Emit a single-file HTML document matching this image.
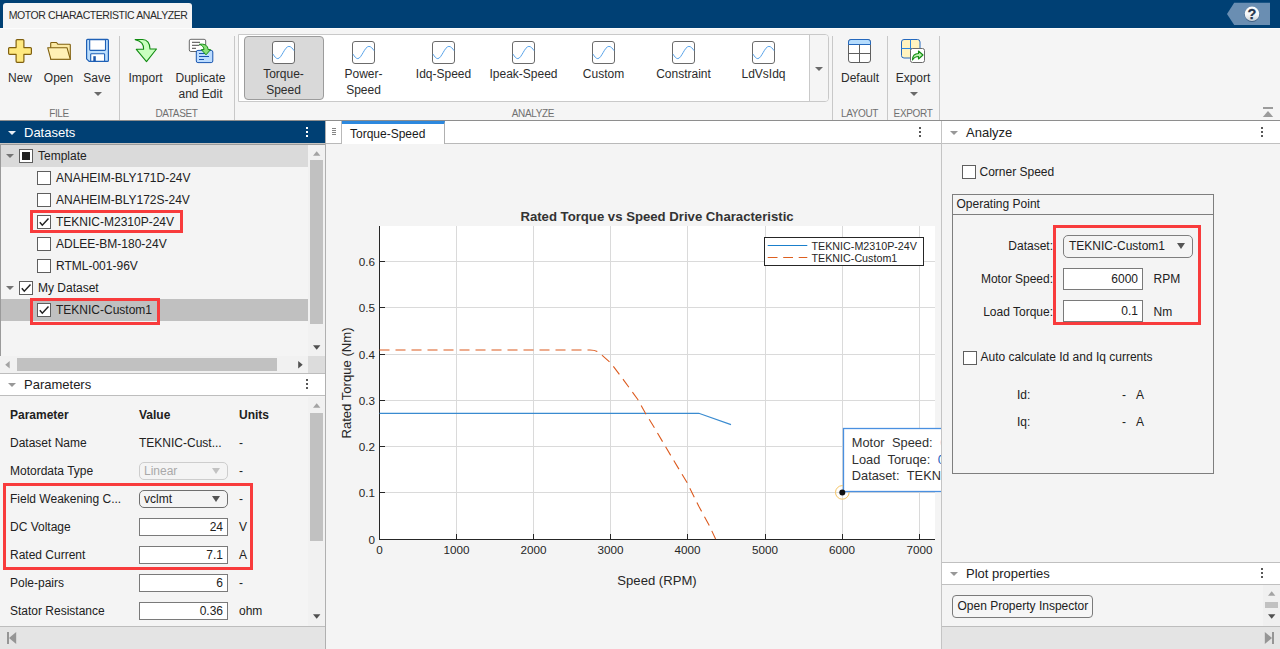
<!DOCTYPE html>
<html><head><meta charset="utf-8">
<style>
*{box-sizing:border-box;margin:0;padding:0}
html,body{width:1280px;height:649px;overflow:hidden;background:#f4f4f4;font-family:"Liberation Sans",sans-serif;font-size:12px;color:#212121}
div,span,svg{position:absolute}
.t{white-space:nowrap;line-height:14px;height:14px}
#hdr{left:0;top:0;width:1280px;height:28px;background:#004074}
#apptab{left:3px;top:3px;width:189px;height:27px;background:#f5f5f5;border-radius:3px 3px 0 0}
#apptab span{left:5.700px;top:5px;font-size:10.500px;letter-spacing:-0.420px;color:#2a2a2a;white-space:nowrap;line-height:14px}
#ts{left:0;top:28px;width:1280px;height:93px;background:#f5f5f5;border-top:1px solid #fcfcfc;border-bottom:1px solid #8e8e8e}
.vsep{top:36px;width:1px;height:84px;background:#c8c8c8}
.tl{font-size:12px;color:#2c2c2c;text-align:center;white-space:nowrap;line-height:16px;transform:translateX(-50%)}
.sec{top:107px;font-size:10px;color:#707070;text-align:center;line-height:14px;white-space:nowrap;transform:translateX(-50%);letter-spacing:-0.350px}
.dar{width:0;height:0;border-left:4px solid transparent;border-right:4px solid transparent;border-top:4px solid #6a6a6a}
</style></head><body>
<!-- HEADER -->
<div id="hdr"><div id="apptab"><span>MOTOR CHARACTERISTIC ANALYZER</span></div>
<svg style="left:1226px;top:2px" width="46" height="24" viewBox="1226 2 46 24"><defs><linearGradient id="hg" x1="0" y1="0" x2="0" y2="1"><stop offset="0" stop-color="#ffffff"/><stop offset=".55" stop-color="#f4f6f8"/><stop offset="1" stop-color="#c9d1d9"/></linearGradient></defs><path d="M1234.200 2.800H1270V24.900H1234.200L1227 13.900Z" fill="#6a8eb2"/><circle cx="1252" cy="14.300" r="7.600" fill="#1d3a5c" opacity=".55"/><circle cx="1252" cy="13.800" r="7.300" fill="url(#hg)"/><text x="1252" y="18.600" text-anchor="middle" font-family="Liberation Sans" font-weight="bold" font-size="14.500" fill="#26374f" stroke="#26374f" stroke-width=".3">?</text></svg>
</div>
<!-- TOOLSTRIP -->
<div id="ts"></div>
<div class="vsep" style="left:119px"></div>
<div class="vsep" style="left:234px"></div>
<div class="vsep" style="left:832px"></div>
<div class="vsep" style="left:887px"></div>
<div class="vsep" style="left:939px"></div>
<!-- FILE icons -->
<svg style="left:0;top:32px" width="240" height="36" viewBox="0 32 240 36">
<path d="M17.100 39.600h5.800a1 1 0 0 1 1 1v7h6.500a1 1 0 0 1 1 1v4.700a1 1 0 0 1-1 1h-6.500v7a1 1 0 0 1-1 1h-5.800a1 1 0 0 1-1-1v-7h-6.500a1 1 0 0 1-1-1v-4.700a1 1 0 0 1 1-1h6.500v-7a1 1 0 0 1 1-1z" fill="#ffe97f" stroke="#80600f" stroke-width="1.200" stroke-linejoin="round"/>
<path d="M50.700 59.200V43.300a.8.800 0 0 1 .8-.8h5l1.500 1.800h11.500a.8.800 0 0 1 .8.800V59.200z" fill="#fbe9a4" stroke="#80600f" stroke-width="1.100" stroke-linejoin="round"/>
<path d="M47.700 47.700H67l3.300 11.600H50.900z" fill="#fff1b5" stroke="#80600f" stroke-width="1.100" stroke-linejoin="round"/>
<path d="M87.600 39.400h19.800a1 1 0 0 1 1 1v20a1 1 0 0 1-1 1H89.100l-2.500-2.500V40.400a1 1 0 0 1 1-1z" fill="#bcdefc" stroke="#1e60b6" stroke-width="1.200" stroke-linejoin="round"/>
<path d="M89.700 39.600h15.800v10a.8.800 0 0 1-.8.800H90.500a.8.800 0 0 1-.8-.8z" fill="#fff" stroke="#1e60b6" stroke-width="1.100"/>
<path d="M90.700 61.400v-6.800a.8.800 0 0 1 .8-.8h12.300a.8.800 0 0 1 .8.800v6.800z" fill="#fff" stroke="#1e60b6" stroke-width="1.100"/>
<rect x="93.300" y="56.200" width="2.500" height="5.300" fill="#1b57ad"/>
<!-- import -->
<path d="M135.200 39.500H142.500C147.200 39.500 150 43.500 150 49H156.500L146.500 61.600 136.300 49.300H143.600C143.800 45 141 41 135.200 39.800z" fill="#c9ffbf" stroke="#118c11" stroke-width="1.100" stroke-linejoin="round"/>
<!-- duplicate -->
<rect x="189.300" y="39.300" width="16.400" height="12.200" rx="1.600" fill="#fff" stroke="#686868" stroke-width="1"/>
<path d="M192 42.400h8M192 45.400h7.500M192 48.400h4" stroke="#6e6e6e" stroke-width="1.100"/>
<rect x="196.300" y="50.400" width="16.500" height="12.200" rx="1.600" fill="#bcdcff" stroke="#1855b0" stroke-width="1"/>
<path d="M199 53.500h6M199 56.500h10M199 59.500h5" stroke="#1855b0" stroke-width="1.100"/>
<path d="M199.300 44.300c2.500-.3 4.500-.2 6 .6 1.800 1 2.700 2.600 2.800 4.700h2.500L206 54.800l-4.700-5.200h2.700c0-1.200-.5-2.300-1.300-3.200-.9-1-2-1.700-3.400-2.100z" fill="#8be07a" stroke="#118c11" stroke-width="1" stroke-linejoin="round"/>
</svg>
<div class="tl" style="left:20px;top:70px">New</div>
<div class="tl" style="left:58.500px;top:70px">Open</div>
<div class="tl" style="left:97px;top:70px">Save</div>
<div class="dar" style="left:94px;top:92px"></div>
<div class="sec" style="left:59px">FILE</div>
<!-- DATASET -->
<div class="tl" style="left:145.500px;top:70px">Import</div>
<div class="tl" style="left:200.500px;top:70px">Duplicate<br>and Edit</div>
<div class="sec" style="left:176.500px">DATASET</div>
<!-- GALLERY -->
<div style="left:238px;top:34px;width:591px;height:68px;background:#fff;border:1px solid #c9c9c9;border-radius:0 4px 4px 0"></div>
<div style="left:809px;top:35px;width:19px;height:66px;background:#f5f5f5;border-left:1px solid #c9c9c9;border-radius:0 3px 3px 0"></div>
<div class="dar" style="left:815px;top:67px"></div>
<div style="left:244px;top:36px;width:80px;height:64px;background:#d9d9d9;border:1px solid #9c9c9c;border-radius:4px"></div>
<svg style="left:0;top:0" width="0" height="0"><defs><g id="gi"><rect x=".5" y=".5" width="22" height="22" rx="2.500" fill="#fff" stroke="#6b6b6b"/><path d="M1 13.100C2.500 15.500 4 17.600 5.800 17.600 9.600 17.600 12.600 5.400 16.900 5.400 19 5.400 20.500 7.500 22.100 9.700" fill="none" stroke="#55a2ea" stroke-width="1"/></g></defs></svg>
<svg style="left:272px;top:41px" width="23" height="23"><use href="#gi"/></svg>
<svg style="left:352px;top:41px" width="23" height="23"><use href="#gi"/></svg>
<svg style="left:432px;top:41px" width="23" height="23"><use href="#gi"/></svg>
<svg style="left:512px;top:41px" width="23" height="23"><use href="#gi"/></svg>
<svg style="left:592px;top:41px" width="23" height="23"><use href="#gi"/></svg>
<svg style="left:672px;top:41px" width="23" height="23"><use href="#gi"/></svg>
<svg style="left:752px;top:41px" width="23" height="23"><use href="#gi"/></svg>
<div class="tl" style="left:283.500px;top:66px">Torque-<br>Speed</div>
<div class="tl" style="left:363.500px;top:66px">Power-<br>Speed</div>
<div class="tl" style="left:443.500px;top:66px">Idq-Speed</div>
<div class="tl" style="left:523.500px;top:66px">Ipeak-Speed</div>
<div class="tl" style="left:603.500px;top:66px">Custom</div>
<div class="tl" style="left:683.500px;top:66px">Constraint</div>
<div class="tl" style="left:763.500px;top:66px">LdVsIdq</div>
<div class="sec" style="left:533px">ANALYZE</div>
<!-- LAYOUT / EXPORT -->
<svg style="left:848px;top:39px" width="24" height="24" viewBox="0 0 24 24"><rect x=".5" y=".5" width="22" height="23" rx="2.500" fill="#fff" stroke="#5f5f5f"/><path d="M.5 3a2.500 2.500 0 0 1 2.500-2.500h17a2.500 2.500 0 0 1 2.500 2.500v2.500H.5z" fill="#b5dcfd" stroke="#2468bd"/><path d="M.5 14.500h22M11.500 5.500v18" stroke="#5f5f5f"/></svg>
<svg style="left:901px;top:39px" width="26" height="26" viewBox="0 0 26 26"><rect x=".5" y=".5" width="18.500" height="18.500" rx="2.500" fill="#fff3bf" stroke="#2468bd"/><path d="M.5 9.500h18M9.500 .5v18" stroke="#2b86e0"/><rect x="9.500" y="9.500" width="14" height="14" rx="2" fill="#fff" stroke="#6b6b6b"/><path d="M11.500 21c0-4 2-6.500 6-6.500V12l4.500 4-4.500 4v-2.500c-3 0-4.500 1-6 3.500z" fill="#b9f2ad" stroke="#118c11" stroke-width="1.100" stroke-linejoin="round"/></svg>
<div class="tl" style="left:860px;top:70px">Default</div>
<div class="tl" style="left:913px;top:70px">Export</div>
<div class="dar" style="left:909.500px;top:92px"></div>
<div class="sec" style="left:859.500px">LAYOUT</div>
<div class="sec" style="left:913px">EXPORT</div>
<svg style="left:1262px;top:106px" width="13" height="12" viewBox="1262 106 13 12"><rect x="1263" y="107" width="10" height="2" fill="#9c9c9c"/><path d="M1268 111L1273.200 117H1262.800z" fill="#9c9c9c"/></svg>
<style>
.cb{width:14px;height:14px;background:#fff;border:1px solid #5e5e5e}
.car{width:0;height:0;border-left:4px solid transparent;border-right:4px solid transparent;border-top:4px solid #989898}
.kb{width:2px;height:2px;background:#585858;box-shadow:0 4px 0 #585858,0 8px 0 #585858}
.ph{font-size:13px;line-height:16px;white-space:nowrap;color:#212121}
.rb{border:3px solid #f83b3c}
.inp{height:18px;background:#fff;border:1px solid #7a7a7a;text-align:right;line-height:16px;font-size:12px;padding-right:4px;color:#212121}
.dd{height:18px;background:#f4f4f4;border:1px solid #6f6f6f;border-radius:5px;line-height:16px;font-size:12px;padding-left:4px;color:#212121;white-space:nowrap}
.dda{width:0;height:0;border-left:4.250px solid transparent;border-right:4.250px solid transparent;border-top:6px solid #555}
</style>
<!-- DATASETS PANEL -->
<div style="left:0;top:121px;width:325px;height:23px;background:#004074"></div>
<div class="car" style="left:8px;top:131px;border-top-color:#e8eef4"></div>
<div class="ph" style="left:24px;top:125px;color:#fff">Datasets</div>
<div class="kb" style="left:306px;top:127px;background:#fff;box-shadow:0 4px 0 #fff,0 8px 0 #fff"></div>
<div style="left:0;top:143px;width:325px;height:1px;background:#c8c5c2"></div><div style="left:0;top:144px;width:325px;height:1px;background:#9c9c9c"></div>
<div style="left:0;top:144px;width:1px;height:212px;background:#9a9a9a"></div>
<div style="left:1px;top:145px;width:307px;height:22px;background:#dadada"></div>
<div style="left:1px;top:299px;width:307px;height:22px;background:#c0c0c0"></div>
<div class="car" style="left:6px;top:154px;border-top-color:#747474"></div>
<div class="cb" style="left:19px;top:149px"><div style="left:2px;top:2px;width:8px;height:8px;background:#222"></div></div>
<div class="t" style="left:38px;top:149px">Template</div>
<div class="cb" style="left:37px;top:171px"></div><div class="t" style="left:56px;top:171px">ANAHEIM-BLY171D-24V</div>
<div class="cb" style="left:37px;top:193px"></div><div class="t" style="left:56px;top:193px">ANAHEIM-BLY172S-24V</div>
<div class="cb" style="left:37px;top:215px"><svg style="left:0;top:0" width="12" height="12"><path d="M1.800 6.300L4.300 9.200 10.500 2.500" fill="none" stroke="#222" stroke-width="1.500"/></svg></div><div class="t" style="left:56px;top:215px">TEKNIC-M2310P-24V</div>
<div class="cb" style="left:37px;top:237px"></div><div class="t" style="left:56px;top:237px">ADLEE-BM-180-24V</div>
<div class="cb" style="left:37px;top:259px"></div><div class="t" style="left:56px;top:259px">RTML-001-96V</div>
<div class="car" style="left:6px;top:286px;border-top-color:#747474"></div>
<div class="cb" style="left:19px;top:281px"><svg style="left:0;top:0" width="12" height="12"><path d="M1.800 6.300L4.300 9.200 10.500 2.500" fill="none" stroke="#222" stroke-width="1.500"/></svg></div>
<div class="t" style="left:38px;top:281px">My Dataset</div>
<div class="cb" style="left:37px;top:303px"><svg style="left:0;top:0" width="12" height="12"><path d="M1.800 6.300L4.300 9.200 10.500 2.500" fill="none" stroke="#222" stroke-width="1.500"/></svg></div><div class="t" style="left:56px;top:303px">TEKNIC-Custom1</div>
<div class="rb" style="left:30px;top:210px;width:153px;height:23px"></div>
<div class="rb" style="left:30px;top:298px;width:130px;height:27px"></div>
<!-- v scrollbar -->
<div style="left:308px;top:145px;width:17px;height:211px;background:#f1f1f1"></div>
<div style="left:310px;top:160px;width:13px;height:164px;background:#c1c1c1"></div>
<svg style="left:313px;top:151px" width="8" height="5"><path d="M0 4.700L3.700 .2 7.400 4.700z" fill="#a3a3a3"/></svg>
<svg style="left:313px;top:344.500px" width="8" height="5"><path d="M0 .3L3.700 4.800 7.400 .3z" fill="#505050"/></svg>
<!-- h scrollbar -->
<div style="left:0;top:356px;width:325px;height:17px;background:#f1f1f1"></div>
<div style="left:17px;top:358px;width:260px;height:13px;background:#c1c1c1"></div>
<svg style="left:5.400px;top:360.800px" width="5" height="8"><path d="M4.700 0L.2 3.700 4.700 7.400z" fill="#a3a3a3"/></svg>
<svg style="left:297.800px;top:360.800px" width="5" height="8"><path d="M.2 0L4.700 3.700 .2 7.400z" fill="#505050"/></svg>
<div style="left:308px;top:356px;width:17px;height:17px;background:#dcdcdc"></div>
<!-- PARAMETERS PANEL -->
<div style="left:0;top:373px;width:325px;height:23px;background:#fff;border-top:1px solid #bdbdbd;border-bottom:1px solid #bdbdbd"></div>
<div class="car" style="left:8px;top:383px"></div>
<div class="ph" style="left:24px;top:377px">Parameters</div>
<div class="kb" style="left:306px;top:379px"></div>
<div class="t" style="left:10px;top:408px;font-weight:bold">Parameter</div>
<div class="t" style="left:139px;top:408px;font-weight:bold">Value</div>
<div class="t" style="left:239px;top:408px;font-weight:bold">Units</div>
<div class="t" style="left:10px;top:436px">Dataset Name</div><div class="t" style="left:139px;top:436px">TEKNIC-Cust...</div><div class="t" style="left:239px;top:436px">-</div>
<div class="t" style="left:10px;top:464px">Motordata Type</div><div class="dd" style="left:139px;top:462px;width:89px;border-color:#cdcdcd;color:#a9a9a9">Linear</div><div class="dda" style="left:212px;top:468px;border-top-color:#c2c2c2"></div><div class="t" style="left:239px;top:464px">-</div>
<div class="t" style="left:10px;top:492px">Field Weakening C...</div><div class="dd" style="left:139px;top:490px;width:89px">vclmt</div><div class="dda" style="left:212px;top:496px"></div><div class="t" style="left:239px;top:492px">-</div>
<div class="t" style="left:10px;top:520px">DC Voltage</div><div class="inp" style="left:139px;top:518px;width:89px">24</div><div class="t" style="left:239px;top:520px">V</div>
<div class="t" style="left:10px;top:548px">Rated Current</div><div class="inp" style="left:139px;top:546px;width:89px">7.1</div><div class="t" style="left:239px;top:548px">A</div>
<div class="t" style="left:10px;top:576px">Pole-pairs</div><div class="inp" style="left:139px;top:574px;width:89px">6</div><div class="t" style="left:239px;top:576px">-</div>
<div class="t" style="left:10px;top:604px">Stator Resistance</div><div class="inp" style="left:139px;top:602px;width:89px">0.36</div><div class="t" style="left:239px;top:604px">ohm</div>
<div class="rb" style="left:3px;top:483px;width:250px;height:87px"></div>
<!-- param v scrollbar -->
<div style="left:308px;top:397px;width:17px;height:229px;background:#f1f1f1"></div>
<div style="left:310px;top:413px;width:13px;height:128px;background:#c1c1c1"></div>
<svg style="left:313px;top:402.500px" width="8" height="5"><path d="M0 4.700L3.700 .2 7.400 4.700z" fill="#a3a3a3"/></svg>
<svg style="left:313px;top:613.500px" width="8" height="5"><path d="M0 .3L3.700 4.800 7.400 .3z" fill="#505050"/></svg>
<!-- bottom bar left -->
<div style="left:0;top:626px;width:325px;height:23px;background:#e4e4e4;border-top:1px solid #bdbdbd"></div>
<svg style="left:6px;top:632px" width="11" height="12"><path d="M2 0v12" stroke="#959595" stroke-width="2"/><path d="M10.200 0L3 6l7.200 6z" fill="#959595"/></svg>
<!-- divider -->
<div style="left:325px;top:121px;width:1px;height:528px;background:#b0b0b0"></div>
<!-- CENTER -->
<div style="left:326px;top:121px;width:615px;height:23px;background:#fff;border-bottom:1px solid #b9b9b9"></div>
<div style="left:326px;top:121px;width:16px;height:23px;border-right:1px solid #b9b9b9"></div>
<div style="left:332px;top:128px;width:4px;height:1px;background:#858585;box-shadow:0 2px 0 #858585,0 4px 0 #858585,0 6px 0 #858585"></div>
<div style="left:342px;top:121px;width:103px;height:23px;background:#fff;border-top:3px solid #2c88de;border-right:1px solid #b0b0b0"></div>
<div class="t" style="left:350px;top:127px;color:#1a1a1a">Torque-Speed</div>
<div class="kb" style="left:919px;top:127px"></div>
<div style="left:326px;top:144px;width:615px;height:505px;background:#f4f4f4"></div>
<svg style="left:326px;top:144px" width="615" height="505" viewBox="326 144 615 505" font-family="Liberation Sans" fill="#262626">
<rect x="379" y="226" width="556" height="313" fill="#fff"/>
<g stroke="#dadada" stroke-width="1">
<path d="M456.500 226v313M533.500 226v313M610.500 226v313M687.500 226v313M765.500 226v313M842.500 226v313M919.500 226v313"/>
<path d="M379 492.500h556M379 446.500h556M379 400.500h556M379 354.500h556M379 307.500h556M379 261.500h556"/>
</g>
<g stroke="#262626" stroke-width="1">
<path d="M379.500 226v313.500M379 539.500h556"/>
<path d="M456.500 539v-5M533.500 539v-5M610.500 539v-5M687.500 539v-5M765.500 539v-5M842.500 539v-5M919.500 539v-5"/>
<path d="M380 492.500h5M380 446.500h5M380 400.500h5M380 354.500h5M380 307.500h5M380 261.500h5"/>
</g>
<path d="M379.500 413.300H698.800L731 424.600" fill="none" stroke="#3a8bd0" stroke-width="1.200"/>
<path d="M379.500 350H590C596 350 599 352 602.200 355.400L610.700 362.900 624.200 380.800 637.800 399.500 645.300 413 654.700 428.300 671.700 457.100 687 482.500 698.800 506.300 709 524.900 715.600 539" fill="none" stroke="#dc5a1e" stroke-width="1.100" stroke-dasharray="10 6"/>
<g font-size="11.700" text-anchor="end">
<text x="375" y="543.500">0</text><text x="375" y="497">0.1</text><text x="375" y="451">0.2</text><text x="375" y="404.500">0.3</text><text x="375" y="358.500">0.4</text><text x="375" y="312">0.5</text><text x="375" y="266">0.6</text>
</g>
<g font-size="11.700" text-anchor="middle">
<text x="379.500" y="554">0</text><text x="456.500" y="554">1000</text><text x="533.500" y="554">2000</text><text x="610.500" y="554">3000</text><text x="687.500" y="554">4000</text><text x="765" y="554">5000</text><text x="842" y="554">6000</text><text x="919.500" y="554">7000</text>
</g>
<text x="657" y="585" font-size="13.100" text-anchor="middle">Speed (RPM)</text>
<text transform="translate(350.800 383) rotate(-90)" font-size="13.100" text-anchor="middle">Rated Torque (Nm)</text>
<text x="657" y="220.500" font-size="13.160" font-weight="bold" fill="#333" text-anchor="middle">Rated Torque vs Speed Drive Characteristic</text>
<!-- legend -->
<rect x="764.500" y="237.500" width="159" height="28" fill="#fff" stroke="#262626"/>
<path d="M767.700 245.500h39.600" stroke="#1a7fcb" stroke-width="1.100"/>
<path d="M767.700 257.500h39.600" stroke="#dc5f20" stroke-width="1.100" stroke-dasharray="9.800 5.700"/>
<text x="811.500" y="249.500" font-size="10.720">TEKNIC-M2310P-24V</text>
<text x="811.500" y="261.500" font-size="10.720">TEKNIC-Custom1</text>
<!-- data tip -->
<circle cx="842.300" cy="492.400" r="6.800" fill="none" stroke="#f5c463" stroke-width="1"/>
<rect x="843.500" y="428.500" width="110" height="63" fill="#fff" stroke="#4a90e0" stroke-width="1.300"/>
<circle cx="842.300" cy="492.400" r="3" fill="#111"/>
<g font-size="12.800" word-spacing="4" fill="#303030">
<text x="851.800" y="447">Motor Speed: <tspan fill="#1f5fbf">6000</tspan></text>
<text x="851.800" y="463.700">Load Toruqe: <tspan fill="#1f5fbf">0.1</tspan></text>
<text x="851.800" y="480">Dataset: TEKNIC-Custom1</text>
</g>
</svg>
<!-- RIGHT PANEL -->
<div style="left:941px;top:121px;width:339px;height:528px;background:#f4f4f4;border-left:1px solid #c4c4c4"></div>
<div style="left:942px;top:121px;width:338px;height:23px;background:#fff;border-bottom:1px solid #c0c0c0"></div>
<div class="car" style="left:950px;top:131px"></div>
<div class="ph" style="left:966px;top:125px">Analyze</div>
<div class="kb" style="left:1261px;top:127px"></div>
<div class="cb" style="left:962px;top:165px;width:14px;height:14px"></div>
<div class="t" style="left:979.500px;top:165px">Corner Speed</div>
<div style="left:952px;top:194px;width:262px;height:280px;border:1px solid #7e7e7e"></div>
<div style="left:952px;top:214px;width:262px;height:1px;background:#7e7e7e"></div>
<div class="t" style="left:956.500px;top:197px">Operating Point</div>
<div class="t" style="left:953px;top:239px;width:100px;text-align:right">Dataset:</div>
<div class="dd" style="left:1063px;top:235px;width:130px;height:23px;line-height:21px;border-color:#7e7e7e;border-radius:5px;padding-left:5px">TEKNIC-Custom1</div><div class="dda" style="left:1176.500px;top:243px"></div>
<div class="t" style="left:953px;top:272px;width:100px;text-align:right">Motor Speed:</div>
<div class="inp" style="left:1063px;top:268px;width:80px;height:22px;line-height:20px">6000</div><div class="t" style="left:1153.500px;top:272px">RPM</div>
<div class="t" style="left:953px;top:305px;width:100px;text-align:right">Load Torque:</div>
<div class="inp" style="left:1063px;top:300px;width:80px;height:22px;line-height:20px">0.1</div><div class="t" style="left:1153.500px;top:305px">Nm</div>
<div class="rb" style="left:1053px;top:225px;width:148px;height:100px"></div>
<div class="cb" style="left:963px;top:351px;width:14px;height:14px"></div>
<div class="t" style="left:980.500px;top:350px">Auto calculate Id and Iq currents</div>
<div class="t" style="left:1017px;top:388px">Id:</div><div class="t" style="left:1122px;top:388px">-</div><div class="t" style="left:1136px;top:388px">A</div>
<div class="t" style="left:1017px;top:415px">Iq:</div><div class="t" style="left:1122px;top:415px">-</div><div class="t" style="left:1136px;top:415px">A</div>
<!-- plot properties -->
<div style="left:942px;top:562px;width:338px;height:23px;background:#fff;border-top:1px solid #c0c0c0;border-bottom:1px solid #c0c0c0"></div>
<div class="car" style="left:950px;top:572px"></div>
<div class="ph" style="left:966px;top:566px">Plot properties</div>
<div class="kb" style="left:1261px;top:568px"></div>
<div style="left:952px;top:595px;width:141px;height:23px;border:1px solid #7a7a7a;border-radius:4px;background:#f6f6f6"></div>
<div class="t" style="left:957.500px;top:599px">Open Property Inspector</div>
<div style="left:1263px;top:585px;width:17px;height:41px;background:#f0f0f0"></div>
<svg style="left:1267.500px;top:591px" width="8" height="5"><path d="M0 4.700L3.700 .2 7.400 4.700z" fill="#a3a3a3"/></svg>
<div style="left:1265px;top:602px;width:13px;height:6px;background:#c1c1c1"></div>
<svg style="left:1267.500px;top:613.500px" width="8" height="5"><path d="M0 .3L3.700 4.800 7.400 .3z" fill="#505050"/></svg>
<div style="left:942px;top:626px;width:338px;height:23px;background:#e4e4e4;border-top:1px solid #bdbdbd"></div>
<svg style="left:1264px;top:632px" width="11" height="12"><path d="M9 0v12" stroke="#959595" stroke-width="2"/><path d="M.8 0L8 6 .8 12z" fill="#959595"/></svg>
</body></html>
